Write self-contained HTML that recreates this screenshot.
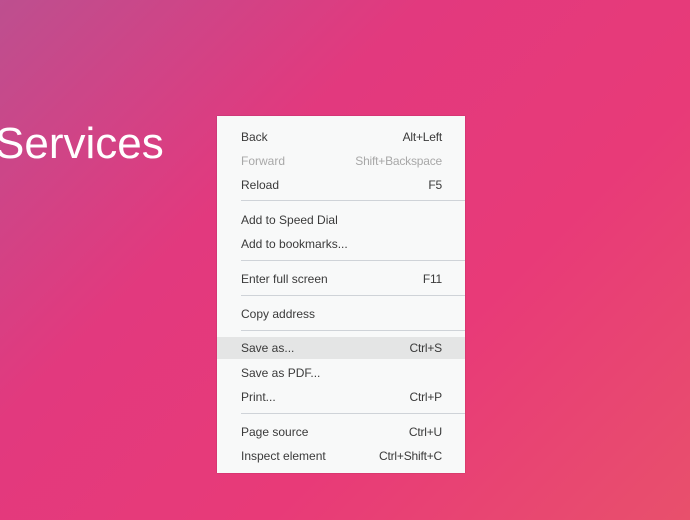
<!DOCTYPE html>
<html><head><style>
html,body{margin:0;padding:0;width:690px;height:520px;overflow:hidden}
body{background:linear-gradient(135deg,#bd4f8f 0%,#e2397e 35%,#e83a78 65%,#e8506c 100%);font-family:"Liberation Sans",sans-serif;position:relative}
.title{position:absolute;left:-5px;top:119px;font-size:44px;color:#fff;letter-spacing:0}
.menu{position:absolute;left:217px;top:116px;width:248px;height:357px;background:#f8f9f9;box-shadow:0 0 1px rgba(0,0,0,.3)}
.r{position:absolute;left:0;width:248px;height:22px;font-size:12px;color:#3a3a3a;line-height:22px}
.r span{position:absolute;left:24px}
.r b{position:absolute;right:23px;font-weight:normal;letter-spacing:-0.2px}
.d{color:#a8a8a8}
.hl{background:#e4e5e5}
.s{position:absolute;left:24px;right:0;height:1px;background:#cfd3d8}
</style></head><body>
<div class="title">Services</div>
<div class="menu">
<div class="r" style="top:10px"><span>Back</span><b>Alt+Left</b></div>
<div class="r d" style="top:34px"><span>Forward</span><b>Shift+Backspace</b></div>
<div class="r" style="top:58px"><span>Reload</span><b>F5</b></div>
<div class="s" style="top:84px"></div>
<div class="r" style="top:93px"><span>Add to Speed Dial</span></div>
<div class="r" style="top:117px"><span>Add to bookmarks...</span></div>
<div class="s" style="top:144px"></div>
<div class="r" style="top:152px"><span>Enter full screen</span><b>F11</b></div>
<div class="s" style="top:179px"></div>
<div class="r" style="top:187px"><span>Copy address</span></div>
<div class="s" style="top:214px"></div>
<div class="r hl" style="top:221px"><span>Save as...</span><b>Ctrl+S</b></div>
<div class="r" style="top:246px"><span>Save as PDF...</span></div>
<div class="r" style="top:270px"><span>Print...</span><b>Ctrl+P</b></div>
<div class="s" style="top:297px"></div>
<div class="r" style="top:305px"><span>Page source</span><b>Ctrl+U</b></div>
<div class="r" style="top:329px"><span>Inspect element</span><b>Ctrl+Shift+C</b></div>
</div>
</body></html>
